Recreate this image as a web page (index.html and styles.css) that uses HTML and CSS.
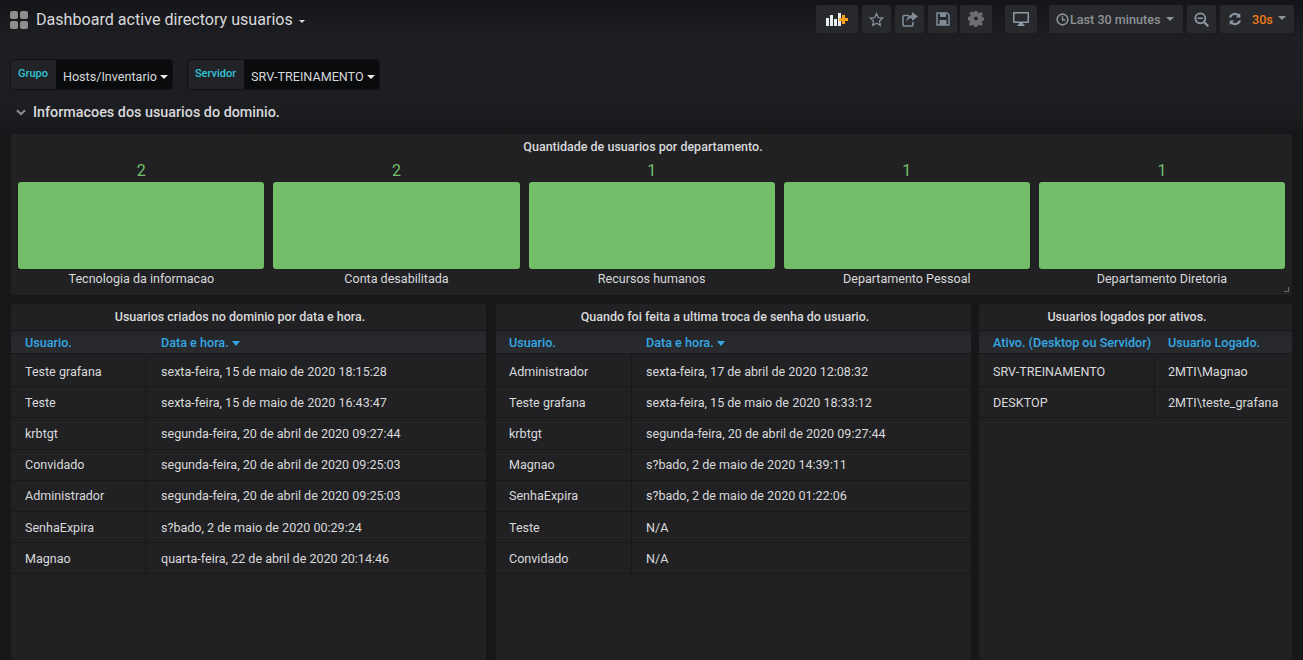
FILE: index.html
```html
<!DOCTYPE html>
<html lang="pt">
<head>
<meta charset="utf-8">
<title>Dashboard active directory usuarios</title>
<link rel="stylesheet" href="styles.css">
</head>
<body>
<header class="navbar">
  <div class="nav-title">
    <svg class="grid-icon" width="18" height="18" viewBox="0 0 18 18"><rect x="0" y="0" width="8" height="8" rx="2"/><rect x="10" y="0" width="8" height="8" rx="2"/><rect x="0" y="10" width="8" height="8" rx="2"/><rect x="10" y="10" width="8" height="8" rx="2"/></svg>
    <span class="title-text">Dashboard active directory usuarios</span>
    <span class="caret small"></span>
  </div>
  <div class="nav-tools">
    <button class="btn w42"><svg width="24" height="14" viewBox="0 0 24 14"><g fill="#e9edf2"><rect x="1" y="6" width="3" height="8"/><rect x="5" y="3" width="3" height="11"/><rect x="9" y="7" width="3" height="7"/><rect x="13" y="1" width="3" height="13"/></g><path fill="#f9a11b" d="M17 3h3v3h3v3h-3v3h-3V9h-3V6h3z"/></svg></button>
    <button class="btn w29"><svg width="15" height="15" viewBox="0 0 16 16"><path fill="none" stroke="#7f8c98" stroke-width="1.4" d="M8 1.6l2 4.3 4.6.6-3.4 3.2.9 4.6L8 11.9l-4.1 2.4.9-4.6L1.400 6.500l4.600-.6z"/></svg></button>
    <button class="btn w29"><svg width="16" height="15" viewBox="0 0 16 15"><path fill="none" stroke="#7f8c98" stroke-width="1.600" d="M7 3.500H2.500a1.500 1.500 0 0 0-1.500 1.500v7.500A1.500 1.500 0 0 0 2.500 14h7a1.500 1.500 0 0 0 1.500-1.500V10"/><path fill="#7f8c98" d="M10 0l6 4.500-6 4.500V6.300C7.500 6.300 5.500 7 4.500 10c0-4 2-6.800 5.500-7z"/></svg></button>
    <button class="btn w29"><svg width="14" height="14" viewBox="0 0 14 14"><path fill="none" stroke="#7f8c98" stroke-width="1.500" d="M1 1h10l2 2v10H1z"/><path fill="#7f8c98" d="M4 1h6v4H4zM3.500 8h7v5h-7z"/></svg></button>
    <button class="btn w32 tight"><svg width="16" height="16" viewBox="0 0 16 16"><path fill="#6d6e71" d="M6.500 0h3l.4 2.200 1.400.6L13.200 1.500l2.100 2.100-1.300 1.900.6 1.400 2.200.4v3l-2.200.4-.6 1.400 1.300 1.900-2.100 2.100-1.900-1.300-1.400.6-.4 2.200h-3l-.4-2.200-1.400-.6-1.900 1.300-2.100-2.100 1.300-1.900-.6-1.400L0 9.500v-3l2.200-.4.600-1.400L1.500 2.800l2.100-2.100 1.900 1.300 1.400-.6z" transform="translate(0 -.5) scale(.97)"/><circle cx="8" cy="7.500" r="2" fill="#28292c"/></svg></button>
    <button class="btn w32 gap-left"><svg width="16" height="14" viewBox="0 0 16 14"><path fill="#8e9aa5" d="M1 0h14a1 1 0 0 1 1 1v9a1 1 0 0 1-1 1H10v1.500h1.500V14h-7v-1.500H6V11H1a1 1 0 0 1-1-1V1a1 1 0 0 1 1-1z"/><rect x="1.500" y="1.500" width="13" height="8" fill="#28292c"/></svg></button>
    <button class="btn time gap-right"><svg width="13" height="13" viewBox="0 0 14 14"><circle cx="7" cy="7" r="5.800" fill="none" stroke="#8e9196" stroke-width="1.700"/><path fill="none" stroke="#8e9196" stroke-width="1.500" d="M7 3.500V7.500H10"/></svg><span class="time-text">Last 30 minutes</span><span class="caret time-caret"></span></button>
    <button class="btn w29"><svg width="15" height="15" viewBox="0 0 15 15"><circle cx="6.300" cy="6.300" r="5" fill="none" stroke="#8e9aa5" stroke-width="1.800"/><path stroke="#8e9aa5" stroke-width="2.200" d="M10 10l4.300 4.300"/><path stroke="#8e9aa5" stroke-width="1.500" d="M3.500 6.300h5.600"/></svg></button>
    <div class="btn-group">
      <button class="btn-part refresh"><svg width="14" height="14" viewBox="0 0 14 14"><path fill="#8e9aa5" d="M12.300 1v4.500H7.800l1.700-1.700A4 4 0 0 0 3.300 5.500H1A6.200 6.200 0 0 1 11 2.300zM1.700 13V8.500h4.500L4.500 10.200a4 4 0 0 0 6.200-1.700H13A6.200 6.200 0 0 1 3 11.700z"/></svg></button>
      <button class="btn-part interval"><span class="orange">30s</span><span class="caret interval-caret"></span></button>
    </div>
  </div>
</header>

<section class="vars">
  <div class="var"><span class="var-label">Grupo</span><span class="var-value">Hosts/Inventario<span class="caret white"></span></span></div>
  <div class="var"><span class="var-label">Servidor</span><span class="var-value">SRV-TREINAMENTO<span class="caret white"></span></span></div>
</section>

<div class="row-title">
  <svg width="10" height="7" viewBox="0 0 10 7"><path fill="none" stroke="#8e8e8e" stroke-width="2" d="M1 1.200l4 4 4-4"/></svg>
  <span>Informacoes dos usuarios do dominio.</span>
</div>

<main class="content">
  <section class="panel bars-panel">
    <h2 class="panel-title">Quantidade de usuarios por departamento.</h2>
    <div class="bars">
      <div class="bar-item"><div class="bar-value">2</div><div class="bar"></div><div class="bar-label">Tecnologia da informacao</div></div>
      <div class="bar-item"><div class="bar-value">2</div><div class="bar"></div><div class="bar-label">Conta desabilitada</div></div>
      <div class="bar-item"><div class="bar-value">1</div><div class="bar"></div><div class="bar-label">Recursos humanos</div></div>
      <div class="bar-item"><div class="bar-value">1</div><div class="bar"></div><div class="bar-label">Departamento Pessoal</div></div>
      <div class="bar-item"><div class="bar-value">1</div><div class="bar"></div><div class="bar-label">Departamento Diretoria</div></div>
    </div>
    <span class="resize"></span>
  </section>

  <div class="tables">
    <section class="panel table-panel t-left">
      <h2 class="panel-title">Usuarios criados no dominio por data e hora.</h2>
      <div class="thead"><div class="c1">Usuario.</div><div class="c2">Data e hora. <span class="sort"></span></div></div>
      <div class="trow"><div class="c1">Teste grafana</div><div class="c2">sexta-feira, 15 de maio de 2020 18:15:28</div></div>
      <div class="trow"><div class="c1">Teste</div><div class="c2">sexta-feira, 15 de maio de 2020 16:43:47</div></div>
      <div class="trow"><div class="c1">krbtgt</div><div class="c2">segunda-feira, 20 de abril de 2020 09:27:44</div></div>
      <div class="trow"><div class="c1">Convidado</div><div class="c2">segunda-feira, 20 de abril de 2020 09:25:03</div></div>
      <div class="trow"><div class="c1">Administrador</div><div class="c2">segunda-feira, 20 de abril de 2020 09:25:03</div></div>
      <div class="trow"><div class="c1">SenhaExpira</div><div class="c2">s?bado, 2 de maio de 2020 00:29:24</div></div>
      <div class="trow"><div class="c1">Magnao</div><div class="c2">quarta-feira, 22 de abril de 2020 20:14:46</div></div>
    </section>
    <section class="panel table-panel t-mid">
      <h2 class="panel-title">Quando foi feita a ultima troca de senha do usuario.</h2>
      <div class="thead"><div class="c1">Usuario.</div><div class="c2">Data e hora. <span class="sort"></span></div></div>
      <div class="trow"><div class="c1">Administrador</div><div class="c2">sexta-feira, 17 de abril de 2020 12:08:32</div></div>
      <div class="trow"><div class="c1">Teste grafana</div><div class="c2">sexta-feira, 15 de maio de 2020 18:33:12</div></div>
      <div class="trow"><div class="c1">krbtgt</div><div class="c2">segunda-feira, 20 de abril de 2020 09:27:44</div></div>
      <div class="trow"><div class="c1">Magnao</div><div class="c2">s?bado, 2 de maio de 2020 14:39:11</div></div>
      <div class="trow"><div class="c1">SenhaExpira</div><div class="c2">s?bado, 2 de maio de 2020 01:22:06</div></div>
      <div class="trow"><div class="c1">Teste</div><div class="c2">N/A</div></div>
      <div class="trow"><div class="c1">Convidado</div><div class="c2">N/A</div></div>
    </section>
    <section class="panel table-panel t-right">
      <h2 class="panel-title">Usuarios logados por ativos.</h2>
      <div class="thead"><div class="c1">Ativo. (Desktop ou Servidor)</div><div class="c2">Usuario Logado.</div></div>
      <div class="trow"><div class="c1">SRV-TREINAMENTO</div><div class="c2">2MTI\Magnao</div></div>
      <div class="trow"><div class="c1">DESKTOP</div><div class="c2">2MTI\teste_grafana</div></div>
    </section>
  </div>
</main>
</body>
</html>
```

FILE: styles.css
```css
* { box-sizing: border-box; }
html, body { height: 100%; }
body {
  margin: 0;
  height: 660px;
  overflow: hidden;
  background: linear-gradient(180deg, #141518 0, #1e1f22 40px, #1c1d20 110px, #161719 135px, #161719 100%);
  font-family: Roboto, "Liberation Sans", sans-serif;
  font-size: 12.55px;
  color: #d8d9da;
}
.navbar {
  height: 45px;
  padding: 5px 9px 0 10px;
  display: flex;
  justify-content: space-between;
  align-items: flex-start;
}
.nav-title { display: flex; align-items: center; height: 29px; color: #d8d9da; }
.grid-icon { fill: #8e8e8e; margin-right: 8px; }
.title-text { font-size: 16.1px; color: #d8d9da; }
.caret {
  display: inline-block;
  width: 0;
  height: 0;
  border-left: 4px solid transparent;
  border-right: 4px solid transparent;
  border-top: 4px solid #d8d9da;
}
.caret.small { border-width: 3px 3px 0; margin: 3px 0 0 6px; }
.caret.white { margin-left: 3px; vertical-align: 2px; border-top-color: #ececec; }
.nav-tools { display: flex; gap: 4px; align-items: center; }
.btn, .btn-part {
  border: 0;
  padding: 0;
  color: #8e9196;
  font: inherit;
  background: #28292c;
  height: 28px;
  display: flex;
  align-items: center;
  justify-content: center;
}
.btn { border-radius: 2px; }
.w42 { width: 42px; }
.w29 { width: 29px; }
.w32 { width: 32px; }
.tight { margin-left: -1px; }
.gap-left { margin-left: 9px; }
.gap-right { margin-left: 8px; }
.time { width: 134px; font-weight: 500; font-size: 12.6px; justify-content: flex-start; padding-left: 7px; }
.time-text { margin-left: 1px; color: #8e9196; }
.time-caret { margin-left: 6px; border-top-color: #8e9196; }
.btn-group { display: flex; border-radius: 2px; overflow: hidden; }
.refresh { width: 29px; }
.interval { width: 45px; justify-content: flex-start; padding-left: 3px; font-weight: 500; font-size: 12.6px; }
.orange { color: #eb7b18; }
.interval-caret { margin-left: 5px; margin-top: -3px; border-top-color: #8e9196; }

.vars { display: flex; gap: 14px; padding: 14px 0 0 10px; height: 45px; }
.var { display: flex; height: 31px; border: 1px solid #101113; border-radius: 3px; overflow: hidden; }
.var-label {
  background: #222326;
  color: #31c4d6;
  font-weight: 500;
  font-size: 11px;
  padding: 7px 8px 0 7px;
  line-height: 14px;
}
.var-value {
  background: #0a0b0d;
  color: #d8d9da;
  font-size: 12.6px;
  padding: 0 4px 0 7px;
  line-height: 33px;
  white-space: nowrap;
}
.row-title {
  display: flex;
  align-items: center;
  gap: 7px;
  height: 44px;
  padding: 0 0 0 16px;
  font-size: 14.35px;
  font-weight: 500;
  color: #d8d9da;
}
.content { padding: 0 11px; }
.panel { background: #212124; border-radius: 3px; position: relative; }
.panel-title {
  margin: 0;
  padding-right: 17px;
  font-size: 12.5px;
  font-weight: 500;
  color: #d8d9da;
  text-align: center;
  height: 26px;
  line-height: 25px;
}
.bars-panel { height: 161px; margin-bottom: 9px; }
.bars { display: flex; gap: 9px; padding: 0 7px 0 7.3px; }
.bar-item { flex: 1 1 0; text-align: center; }
.bar-value { color: #73bf69; font-size: 16px; line-height: 22px; height: 22px; }
.bar { height: 87px; background: #73bf69; border-radius: 3px; }
.bar-label { line-height: 19px; color: #d8d9da; }
.resize {
  position: absolute;
  right: 3px;
  bottom: 3px;
  width: 5px;
  height: 5px;
  border-right: 1px solid #6b6b6b;
  border-bottom: 1px solid #6b6b6b;
}
.tables { display: flex; gap: 10px; height: 356px; }
.table-panel { height: 100%; }
.t-left, .t-mid { width: 475px; }
.t-right { width: 313px; margin-left: -2px; }
.thead, .trow { display: flex; align-items: center; }
.thead {
  height: 24px;
  margin-bottom: 2px;
  color: #33a8e5;
  font-weight: 500;
  font-size: 12.6px;
  background: linear-gradient(180deg, #25262a 0, #2a2b2e 100%);
  border-top: 1px solid #17181a;
  border-bottom: 1px solid #17181a;
}
.trow {
  height: 31.200px;
  border-bottom: 1px solid #17181a;
  align-items: stretch;
}
.trow .c1, .trow .c2 { display: flex; align-items: center; }
.c1 { width: 135px; padding-left: 14px; flex: none; white-space: nowrap; }
.c2 { padding-left: 15px; flex: 1; white-space: nowrap; }
.t-mid .c1 { width: 136px; padding-left: 13px; }
.t-mid .c2 { padding-left: 14px; }
.t-right .c1 { width: 176px; }
.t-right .c2 { padding-left: 13px; }
.trow .c1 { border-right: 1px solid #17181a; }
.sort {
  display: inline-block;
  width: 0;
  height: 0;
  border-left: 4px solid transparent;
  border-right: 4px solid transparent;
  border-top: 5px solid #33a8e5;
  vertical-align: 1px;
}
```
